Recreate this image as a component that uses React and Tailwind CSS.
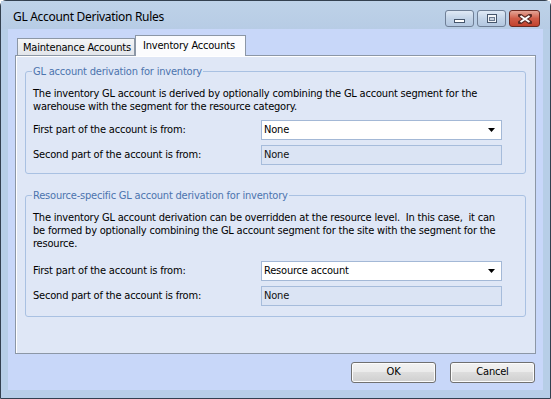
import React from "react";

const body = "font-['DejaVu_Sans_Condensed','Liberation_Sans',sans-serif] text-[11px] tracking-[-0.2px]";

function Arrow() {
  return (
    <svg width="7" height="4" viewBox="0 0 7 4" className="block">
      <path d="M0 0 H7 L3.5 4 Z" fill="#000" />
    </svg>
  );
}

function Combo({ value }) {
  return (
    <div className="h-[20px] bg-white border border-[#a3b8d6] flex items-center pl-[2px] pr-[6px]">
      <span className="flex-1 text-black">{value}</span>
      <Arrow />
    </div>
  );
}

function Field({ value }) {
  return (
    <div className="h-[20px] bg-[#dbe4f4] border border-[#a6bcdb] flex items-center pl-[2px] text-[#111]">
      {value}
    </div>
  );
}

function Group({ legend, children, className }) {
  return (
    <fieldset className={"border border-[#a9c1e2] rounded-[3px] pl-[7px] pr-[21px] " + className}>
      <legend className="-ml-[1px] px-[1px] leading-[13px] text-[#4c74ae]">{legend}</legend>
      {children}
    </fieldset>
  );
}

function Row({ label, children, className }) {
  return (
    <div className={"grid grid-cols-[228px_241px] items-center " + className}>
      <span className="text-black">{label}</span>
      {children}
    </div>
  );
}

function TitleBtn({ kind }) {
  if (kind === "close") {
    return (
      <div className="w-[31px] h-[17px] rounded-[3px] border border-[#6a2a22] bg-gradient-to-b from-[#e3a597] via-[#cf5c48] to-[#c2422d] flex items-center justify-center">
        <svg width="14" height="10" viewBox="0 0 14 10">
          <path d="M2 1.5 L12 8.5 M12 1.5 L2 8.5" stroke="#5a2a24" strokeWidth="4" strokeLinecap="square" />
          <path d="M2.5 2 L11.5 8 M11.5 2 L2.5 8" stroke="#fff" strokeWidth="2" />
        </svg>
      </div>
    );
  }
  return (
    <div className="w-[29px] h-[17px] rounded-[3px] border border-[#6f7f96] bg-gradient-to-b from-[#dfe9f5] via-[#c3d4e8] to-[#b3c7e0] flex items-center justify-center">
      {kind === "min" ? (
        <div className="w-[11px] h-[4px] mt-[5px] bg-white border border-[#45556b]" />
      ) : (
        <div className="w-[10px] h-[9px] border border-[#45556b] bg-[#f4f6f9] flex items-center justify-center">
          <div className="w-[6px] h-[4px] border border-[#6a7a90] bg-[#c9d3df]" />
        </div>
      )}
    </div>
  );
}

function Button({ children }) {
  return (
    <div className="w-[85px] h-[21px] rounded-[3px] border border-[#707070] bg-[linear-gradient(#f2f2f2_0%,#ebebeb_45%,#dddddd_50%,#cfcfcf_100%)] flex items-center justify-center text-black shadow-[inset_0_0_0_1px_#fcfcfc]">
      {children}
    </div>
  );
}

export default function App() {
  return (
    <div className={"w-[551px] h-[399px] flex flex-col border border-[#33404f] rounded-t-[6px] bg-[#b7cee7] " + body}>
      <div className="h-[29px] flex items-start bg-gradient-to-b from-[#bed2e8] to-[#b7cce5]">
        <span className="ml-[12px] mt-[8px] text-[12px] tracking-[-0.3px] text-black font-['Noto_Sans',sans-serif] leading-[16px]">
          GL Account Derivation Rules
        </span>
        <div className="ml-auto mr-[10px] mt-[9px] flex gap-[3px]">
          <TitleBtn kind="min" />
          <TitleBtn kind="max" />
          <TitleBtn kind="close" />
        </div>
      </div>
      <div className="flex-1 mx-[7px] mb-[8px] bg-[#c8d7f9] px-[7px] pt-[6px] pb-[7px] flex flex-col">
        <div className="h-[20px] flex items-end pl-[2px]">
          <div className="h-[17px] w-[118px] whitespace-nowrap border border-b-0 border-[#8c97a6] bg-gradient-to-b from-[#f4f5f7] to-[#e2e5ea] pl-[5px] flex items-center leading-[13px] text-black">
            Maintenance Accounts
          </div>
          <div className="relative z-10 -mb-[1px] h-[21px] w-[111px] whitespace-nowrap border border-b-0 border-[#8c97a6] bg-[#fbfcfe] pl-[7px] pb-[2px] flex items-center leading-[13px] text-black">
            Inventory Accounts
          </div>
        </div>
        <div className="h-[299px] border border-[#8c97a6] bg-[#dfe7f6] shadow-[inset_1px_1px_0_#ffffff] px-[9px] pt-[9px]">
          <Group legend="GL account derivation for inventory" className="pb-[8px]">
            <p className="leading-[13px] pt-[9px] text-black whitespace-nowrap">
              The inventory GL account is derived by optionally combining the GL account segment for the
              <br />
              warehouse with the segment for the resource category.
            </p>
            <Row label="First part of the account is from:" className="mt-[7px]">
              <Combo value="None" />
            </Row>
            <Row label="Second part of the account is from:" className="mt-[5px]">
              <Field value="None" />
            </Row>
          </Group>
          <Group legend="Resource-specific GL account derivation for inventory" className="mt-[15px] pb-[10px]">
            <p className="leading-[13px] pt-[9px] text-black whitespace-nowrap">
              The inventory GL account derivation can be overridden at the resource level.&nbsp; In this case,&nbsp; it can
              <br />
              be formed by optionally combining the GL account segment for the site with the segment for the
              <br />
              resource.
            </p>
            <Row label="First part of the account is from:" className="mt-[11px]">
              <Combo value="Resource account" />
            </Row>
            <Row label="Second part of the account is from:" className="mt-[5px]">
              <Field value="None" />
            </Row>
          </Group>
        </div>
        <div className="mt-[8px] flex justify-end gap-[14px] pr-[1px]">
          <Button>OK</Button>
          <Button>Cancel</Button>
        </div>
      </div>
    </div>
  );
}
